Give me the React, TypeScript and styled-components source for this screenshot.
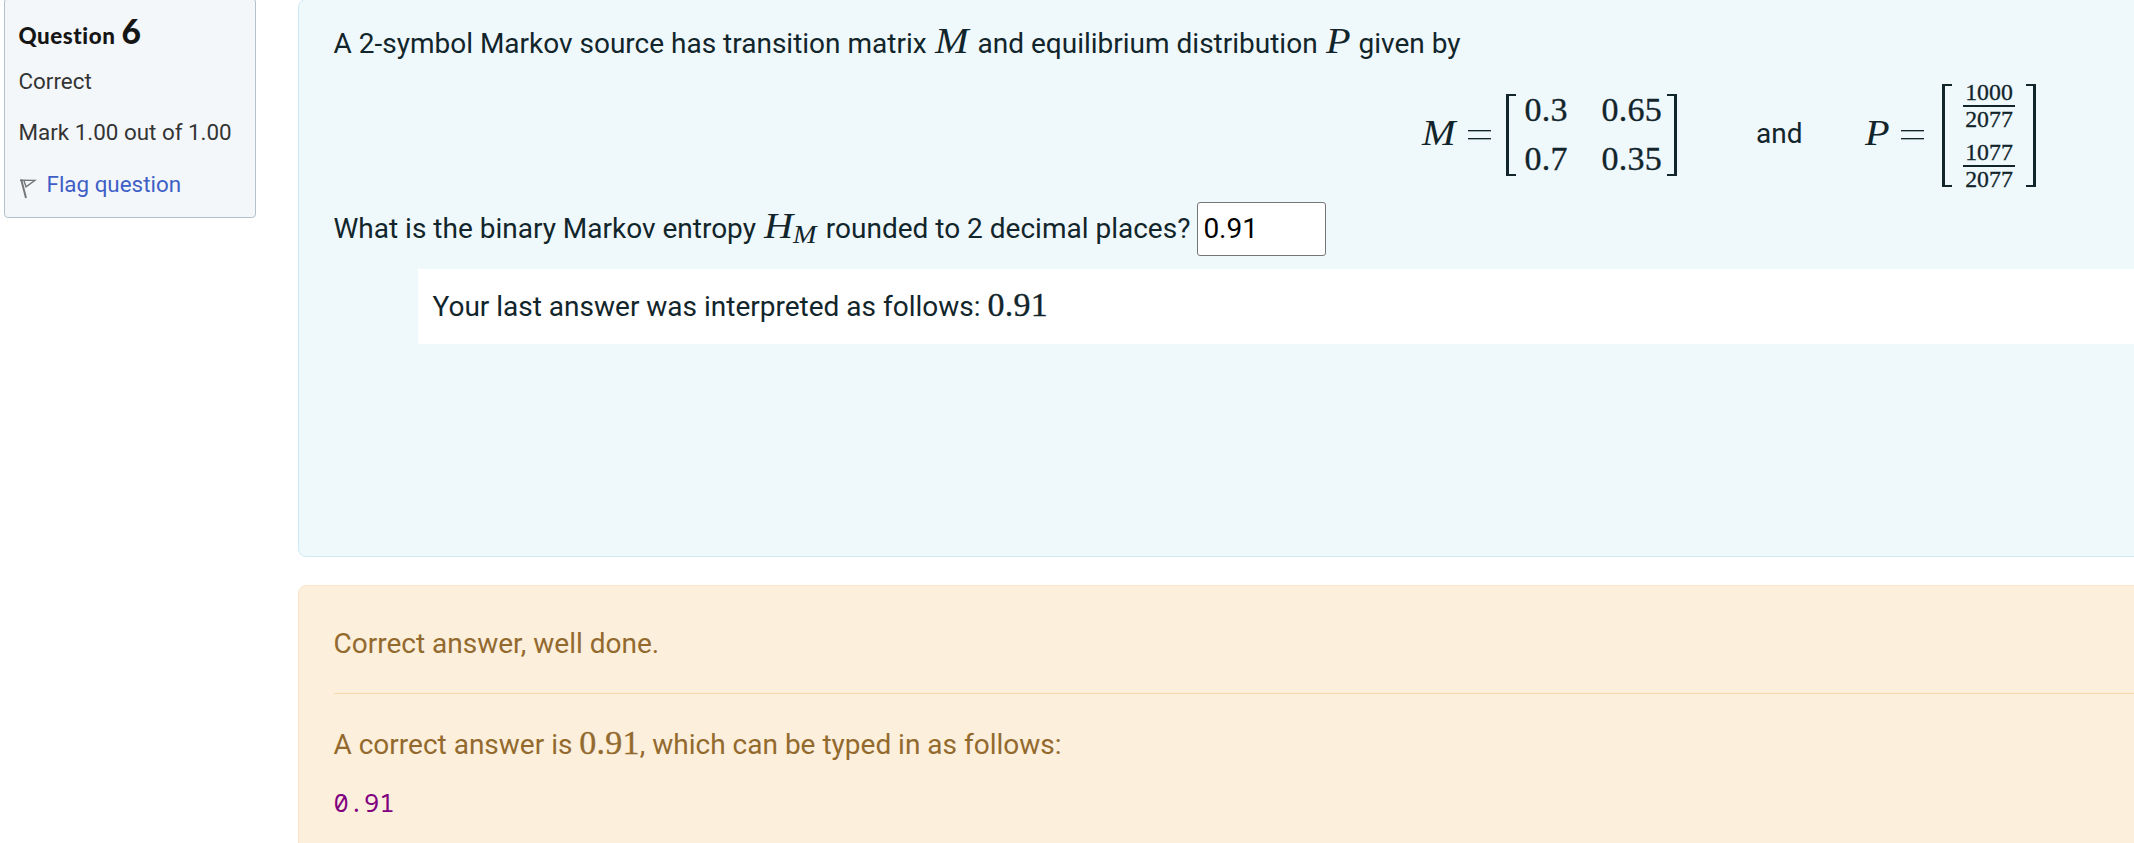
import React from "react";
import styled, { createGlobalStyle } from "styled-components";

const GlobalStyle = createGlobalStyle`
  * { box-sizing: border-box; }
  body { margin: 0; background: #fff; font-family: Roboto, "Liberation Sans", sans-serif; overflow: hidden; }
`;

const Page = styled.div`
  display: flex;
  align-items: flex-start;
  width: 100%;
  height: 843px;
  overflow: hidden;
`;

const InfoCard = styled.aside`
  flex: none;
  width: 252px;
  height: 220px;
  margin: -2px 42px 0 4px;
  padding: 9px 14px 0 13.5px;
  border: 1px solid #b5c2cb;
  border-radius: 4px;
  background: #f3f7fa;
  color: #343434;
  font-size: 22.4px;
`;

const QuestionTitle = styled.h3`
  display: flex;
  align-items: baseline;
  gap: 6px;
  height: 53px;
  margin: 0;
  color: #151515;
  font: 900 22.4px/46px Lato, sans-serif;
  letter-spacing: 0.55px;
`;

const QuestionNumber = styled.span`
  font-size: 33.5px;
`;

const InfoRow = styled.div<{ $height: number }>`
  height: ${(p) => p.$height}px;
  line-height: 40px;
  white-space: nowrap;
`;

const FlagLink = styled.a`
  display: flex;
  align-items: center;
  gap: 10px;
  height: 40px;
  color: #3f5fc7;
`;

const FlagIcon = styled.svg`
  flex: none;
  width: 18px;
  height: 22px;
  margin: 8px 0 0 0;
`;

const Content = styled.main`
  flex: 1;
  min-width: 0;
  margin-right: -20px;
  font-size: 28px;
  line-height: 42px;
  white-space: nowrap;
`;

const QuestionPanel = styled.section`
  height: 558px;
  margin-top: -1px;
  padding: 21px 0 0 34.5px;
  border: 1px solid #cdeaf5;
  border-radius: 8px;
  background: #eff8fb;
  color: #11252b;
`;

const Line = styled.div<{ $height?: number }>`
  display: flex;
  align-items: baseline;
  height: ${(p) => p.$height ?? 42}px;
  line-height: ${(p) => p.$height ?? 42}px;
  white-space: pre;
`;

const MathNumber = styled.span`
  font-family: "Liberation Serif", serif;
  font-size: 34px;
  letter-spacing: 0.25px;
  -webkit-text-stroke: 0.35px currentColor;
`;

const Variable = styled.span<{ $width: number; $stretch?: number; $size?: number; $drop?: number }>`
  display: inline-block;
  width: ${(p) => p.$width}px;
  margin-left: 1px;
  font-family: "Liberation Serif", serif;
  font-style: italic;
  font-size: ${(p) => p.$size ?? 35}px;
  transform: translateY(${(p) => p.$drop ?? 0}px) scaleX(${(p) => p.$stretch ?? 1.15});
  transform-origin: 0 50%;
`;

const EquationRow = styled.div`
  display: flex;
  align-items: center;
  height: 137px;
  padding: 5px 0 0 1087.5px;
`;

const Equals = styled.span<{ $before: number; $after: number }>`
  width: 23px;
  height: 9px;
  margin: 0 ${(p) => p.$after}px 0 ${(p) => p.$before}px;
  border: solid currentColor;
  border-width: 1px 0;
  box-shadow: 0 1px 0 rgba(17, 37, 43, 0.35), inset 0 1px 0 rgba(17, 37, 43, 0.35);
`;

const Matrix = styled.div<{ $width: number; $height: number }>`
  display: flex;
  align-items: center;
  justify-content: space-between;
  width: ${(p) => p.$width}px;
  height: ${(p) => p.$height}px;
`;

const Bracket = styled.span<{ $side: "left" | "right" }>`
  width: 10px;
  height: 100%;
  margin-top: 2px;
  border: 2px solid currentColor;
  border-width: ${(p) => (p.$side === "left" ? "2px 0 2px 3px" : "2px 3px 2px 0")};
`;

const Entries = styled.div`
  display: grid;
  grid-template-columns: 77px 60px;
  grid-auto-rows: 49px;
  line-height: 49px;
  margin: 0 0 0 3px;
`;

const Conjunction = styled.span`
  width: 45px;
  margin: 0 63px 0 79px;
`;

const Fractions = styled.div`
  display: flex;
  flex-direction: column;
  gap: 10px;
  padding-top: 5px;
`;

const Fraction = styled.div`
  width: 52px;
  font-family: "Liberation Serif", serif;
  font-size: 23.8px;
  -webkit-text-stroke: 0.3px currentColor;
  text-align: center;
`;

const Numerator = styled.div`
  height: 25px;
  line-height: 21px;
  border-bottom: 2px solid currentColor;
`;

const Denominator = styled.div`
  height: 25px;
  line-height: 24px;
`;

const AnswerInput = styled.input`
  width: 129px;
  height: 54px;
  margin: 0 0 0 7px;
  padding: 0 5px;
  border: 1px solid #767676;
  border-radius: 3px;
  background: #fff;
  color: #000;
  font: 28px Roboto, sans-serif;
`;

const Interpretation = styled.div`
  height: 75px;
  margin: 15px 0 0 84.5px;
  padding-left: 14.5px;
  background: #fff;
`;

const FeedbackPanel = styled.section`
  height: 300px;
  margin-top: 28px;
  padding: 37px 0 0 34.5px;
  border: 1px solid #fbe6cd;
  border-radius: 8px;
  background: #fcefdc;
  color: #936a2e;
`;

const Divider = styled.hr`
  height: 1px;
  margin: 28px 0;
  border: 0;
  background: #f6d9ab;
`;

const CodeAnswer = styled.code`
  display: block;
  margin-top: 17px;
  color: #800080;
  font: 25.4px/42px "Noto Sans Mono", "DejaVu Sans Mono", monospace;
`;

const fractions = [
  ["1000", "2077"],
  ["1077", "2077"],
];

export default function App() {
  return (
    <Page>
      <GlobalStyle />
      <InfoCard>
        <QuestionTitle>
          Question <QuestionNumber>6</QuestionNumber>
        </QuestionTitle>
        <InfoRow $height={51}>Correct</InfoRow>
        <InfoRow $height={52}>Mark 1.00 out of 1.00</InfoRow>
        <FlagLink>
          <FlagIcon viewBox="0 0 18 22" fill="none" stroke="#777">
            <path d="M2.2 2.5 7 21" strokeWidth="2" />
            <path d="M1 3.2 16 3.4 7 9.8 4.8 3.3" strokeWidth="1.4" />
          </FlagIcon>
          Flag question
        </FlagLink>
      </InfoCard>
      <Content>
        <QuestionPanel>
          <Line>
            <span>A 2-symbol Markov source has transition matrix </span>
            <Variable $width={36}>M</Variable>
            <span> and equilibrium distribution </span>
            <Variable $width={26}>P</Variable>
            <span> given by</span>
          </Line>
          <EquationRow>
            <Variable $width={36}>M</Variable>
            <Equals $before={10} $after={15} />
            <Matrix $width={171} $height={82}>
              <Bracket $side="left" />
              <Entries>
                {["0.3", "0.65", "0.7", "0.35"].map((value) => (
                  <MathNumber key={value}>{value}</MathNumber>
                ))}
              </Entries>
              <Bracket $side="right" />
            </Matrix>
            <Conjunction>and</Conjunction>
            <Variable $width={26}>P</Variable>
            <Equals $before={10} $after={18} />
            <Matrix $width={94} $height={103}>
              <Bracket $side="left" />
              <Fractions>
                {fractions.map(([top, bottom]) => (
                  <Fraction key={top}>
                    <Numerator>{top}</Numerator>
                    <Denominator>{bottom}</Denominator>
                  </Fraction>
                ))}
              </Fractions>
              <Bracket $side="right" />
            </Matrix>
          </EquationRow>
          <Line $height={54}>
            <span>What is the binary Markov entropy </span>
            <Variable $width={28}>H</Variable>
            <Variable $width={26} $size={24.5} $drop={5}>M</Variable>
            <span> rounded to 2 decimal places?</span>
            <AnswerInput defaultValue="0.91" />
          </Line>
          <Interpretation>
            <Line $height={72}>
              <span>Your last answer was interpreted as follows: </span>
              <MathNumber>0.91</MathNumber>
            </Line>
          </Interpretation>
        </QuestionPanel>
        <FeedbackPanel>
          <Line>Correct answer, well done.</Line>
          <Divider />
          <Line>
            <span>A correct answer is </span>
            <MathNumber>0.91</MathNumber>
            <span>, which can be typed in as follows:</span>
          </Line>
          <CodeAnswer>0.91</CodeAnswer>
        </FeedbackPanel>
      </Content>
    </Page>
  );
}
